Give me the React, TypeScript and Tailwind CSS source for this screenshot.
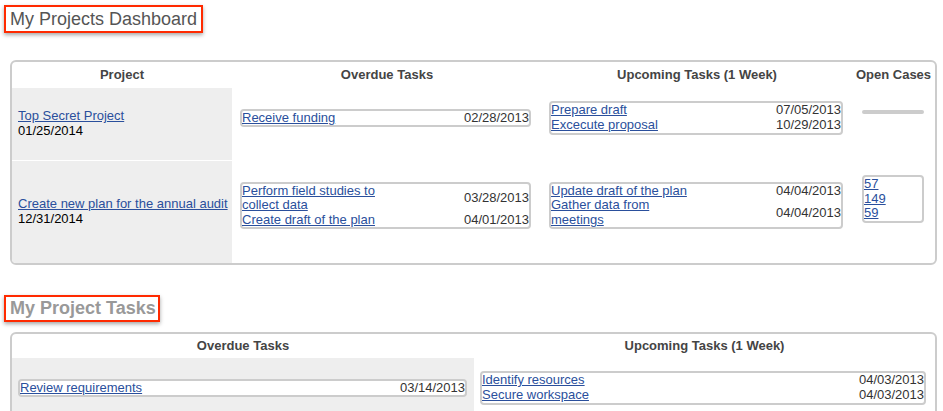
import React from "react";

const link = "text-[#2a4f9c] underline";

type Task = { name: string; date: string };

function TaskBox({ tasks, className = "" }: { tasks: Task[]; className?: string }) {
  return (
    <div className={"w-full border-2 border-[#cccccc] rounded-[4px] bg-white " + className}>
      {tasks.map((t, i) => (
        <div key={i} className="grid grid-cols-2 items-center">
          <a href="#" className={link}>{t.name}</a>
          <span className="text-right text-[#333]">{t.date}</span>
        </div>
      ))}
    </div>
  );
}

function CasesBox({ cases }: { cases: string[] }) {
  return (
    <div className="w-full border-2 border-[#cccccc] rounded-[4px] bg-white mb-[25px]">
      {cases.map((c) => (
        <div key={c}>
          <a href="#" className={link}>{c}</a>
        </div>
      ))}
    </div>
  );
}

function Title({ children, bold }: { children: React.ReactNode; bold?: boolean }) {
  return (
    <div className="pl-[4px]">
      <div
        className={
          "inline-block border-2 border-[#ff2a00] px-[4px] text-[18px] shadow-[0_2px_4px_rgba(0,0,0,0.35)] " +
          (bold ? "font-bold text-[#999999] leading-[23px] pr-[2px]" : "text-[#555555] leading-[24px]")
        }
      >
        {children}
      </div>
    </div>
  );
}

const header = "flex items-center justify-center font-bold text-[#444444]";

export default function App() {
  return (
    <div className="w-[943px] h-[411px] overflow-hidden bg-white font-['Liberation_Sans',Arial,sans-serif] text-[13px] leading-[14.6px] text-black">
      <div className="pt-[5px]">
        <Title>My Projects Dashboard</Title>
      </div>

      <div className="mt-[27px] ml-[10px] w-[927px] border-2 border-[#cccccc] rounded-[6px] overflow-hidden">
        <div className="grid grid-cols-[220px_310px_310px_83px]">
          <div className={header + " h-[26px]"}>Project</div>
          <div className={header + " h-[26px]"}>Overdue Tasks</div>
          <div className={header + " h-[26px]"}>Upcoming Tasks (1 Week)</div>
          <div className={header + " h-[26px]"}>Open Cases</div>

          {/* Row 1 */}
          <div className="h-[72px] bg-[#eeeeee] flex flex-col justify-center pl-[6px]">
            <a href="#" className={link}>Top Secret Project</a>
            <span>01/25/2014</span>
          </div>
          <div className="h-[72px] flex items-center pl-[8px] pr-[11px]">
            <TaskBox className="mb-[12px]" tasks={[{ name: "Receive funding", date: "02/28/2013" }]} />
          </div>
          <div className="h-[72px] flex items-center pl-[7px] pr-[9px]">
            <TaskBox
              className="mb-[12px]"
              tasks={[
                { name: "Prepare draft", date: "07/05/2013" },
                { name: "Excecute proposal", date: "10/29/2013" },
              ]}
            />
          </div>
          <div className="h-[72px] flex items-center pl-[10px] pr-[11px]">
            <CasesBox cases={[]} />
          </div>

          {/* Row 2 */}
          <div className="h-[103px] bg-[#eeeeee] border-t border-white flex flex-col justify-center pl-[6px]">
            <a href="#" className={link}>Create new plan for the annual audit</a>
            <span>12/31/2014</span>
          </div>
          <div className="h-[103px] flex items-center pl-[8px] pr-[11px]">
            <TaskBox
              className="mb-[12px]"
              tasks={[
                { name: "Perform field studies to collect data", date: "03/28/2013" },
                { name: "Create draft of the plan", date: "04/01/2013" },
              ]}
            />
          </div>
          <div className="h-[103px] flex items-center pl-[7px] pr-[9px]">
            <TaskBox
              className="mb-[12px]"
              tasks={[
                { name: "Update draft of the plan", date: "04/04/2013" },
                { name: "Gather data from meetings", date: "04/04/2013" },
              ]}
            />
          </div>
          <div className="h-[103px] flex items-center pl-[10px] pr-[11px]">
            <CasesBox cases={["57", "149", "59"]} />
          </div>
        </div>
      </div>

      <div className="mt-[30px]">
        <Title bold>My Project Tasks</Title>
      </div>

      <div className="mt-[10px] ml-[10px] w-[927px] border-2 border-[#cccccc] rounded-[6px] overflow-hidden">
        <div className="grid grid-cols-[462px_461px]">
          <div className={header + " h-[24px]"}>Overdue Tasks</div>
          <div className={header + " h-[24px]"}>Upcoming Tasks (1 Week)</div>

          <div className="h-[72px] bg-[#eeeeee] flex items-center pl-[6px] pr-[7px]">
            <TaskBox className="mb-[12px]" tasks={[{ name: "Review requirements", date: "03/14/2013" }]} />
          </div>
          <div className="h-[72px] flex items-center pl-[6px] pr-[9px]">
            <TaskBox
              className="mb-[12px]"
              tasks={[
                { name: "Identify resources", date: "04/03/2013" },
                { name: "Secure workspace", date: "04/03/2013" },
              ]}
            />
          </div>
        </div>
      </div>
    </div>
  );
}
